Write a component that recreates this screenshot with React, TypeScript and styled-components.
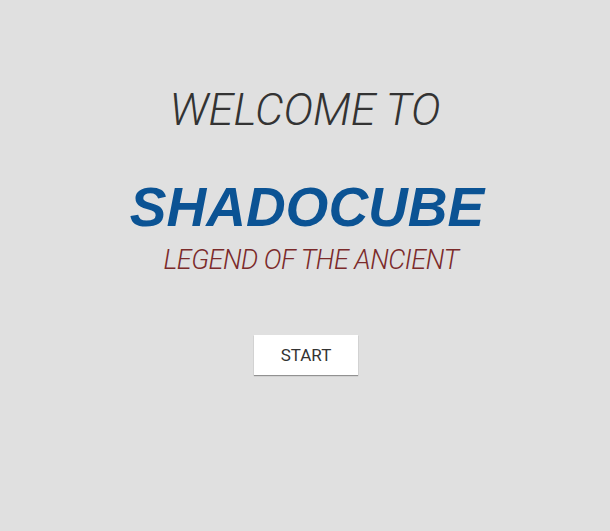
import React from "react";
import styled, { createGlobalStyle } from "styled-components";

const GlobalStyle = createGlobalStyle`
  html, body {
    margin: 0;
    padding: 0;
    background: #e0e0e0;
    font-family: Roboto, "Liberation Sans", sans-serif;
  }
`;

const Screen = styled.div`
  width: 610px;
  height: 531px;
  display: flex;
  flex-direction: column;
  align-items: center;
  background: #e0e0e0;
`;

const Welcome = styled.h2`
  margin: 84px 0 0;
  font-size: 45px;
  font-weight: 300;
  font-style: italic;
  line-height: 52px;
  color: #333333;
`;

const TitleBlock = styled.div`
  margin-top: 39px;
  display: flex;
  flex-direction: column;
  align-items: center;
`;

const Title = styled.h1`
  margin: 0 0 0 4px;
  font-family: "Liberation Sans", Arial, sans-serif;
  font-size: 55px;
  font-weight: 700;
  font-style: italic;
  line-height: 64px;
  color: #0b5394;
`;

const Subtitle = styled.h3`
  margin: 5px 0 0 12px;
  font-size: 27px;
  font-weight: 300;
  font-style: italic;
  line-height: 32px;
  letter-spacing: -0.5px;
  color: #7b2a2a;
`;

const StartButton = styled.button`
  margin: 59px 0 0 2px;
  width: 104px;
  height: 40px;
  border: none;
  border-radius: 0;
  background: #ffffff;
  box-shadow: 0 1px 1px rgba(0, 0, 0, 0.35);
  font-family: Roboto, "Liberation Sans", sans-serif;
  font-size: 17px;
  color: #333333;
  cursor: pointer;
`;

export default function App() {
  return (
    <>
      <GlobalStyle />
      <Screen>
        <Welcome>WELCOME TO</Welcome>
        <TitleBlock>
          <Title>SHADOCUBE</Title>
          <Subtitle>LEGEND OF THE ANCIENT</Subtitle>
        </TitleBlock>
        <StartButton>START</StartButton>
      </Screen>
    </>
  );
}
